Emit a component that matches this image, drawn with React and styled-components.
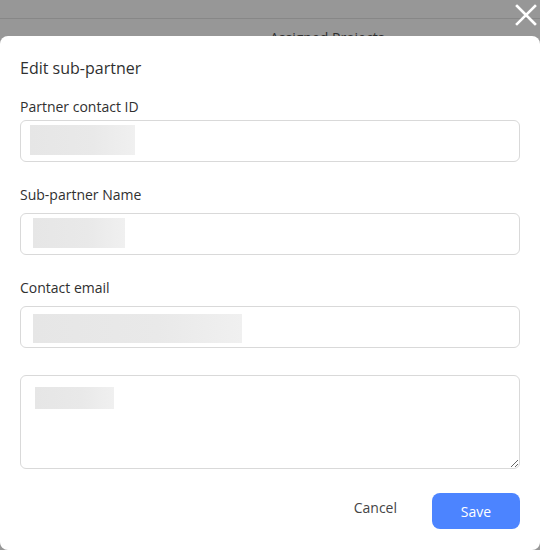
import React from 'react';
import styled, { createGlobalStyle } from 'styled-components';

const GlobalStyle = createGlobalStyle`
  html, body {
    margin: 0;
    padding: 0;
    background: #979797;
    font-family: "Open Sans", "Liberation Sans", sans-serif;
    overflow: hidden;
  }
`;

const Page = styled.div`
  height: 550px;
  background: #979797;
`;

const TopBar = styled.div`
  height: 18px;
  border-bottom: 1px solid #878787;
`;

const PageHeading = styled.div`
  padding-top: 9px;
  padding-left: 270px;
  font-size: 14px;
  color: #2e2e2e;
`;

const Modal = styled.div`
  position: fixed;
  left: 0;
  top: 36px;
  width: 540px;
  height: 514px;
  box-sizing: border-box;
  padding: 20px 20px 21px;
  background: #fff;
  border-radius: 8px;
  display: flex;
  flex-direction: column;
`;

const CloseButton = styled.button`
  position: fixed;
  top: 3px;
  right: 2px;
  width: 24px;
  height: 24px;
  padding: 0;
  border: 0;
  background: transparent;
  display: flex;
  align-items: center;
  justify-content: center;
  cursor: pointer;
`;

const Title = styled.h2`
  margin: 0 0 17px;
  font-size: 16px;
  line-height: 24px;
  font-weight: 400;
  color: #303030;
`;

const Field = styled.div`
  margin-bottom: 23px;
`;

const Label = styled.div`
  font-size: 14px;
  line-height: 20px;
  color: #303030;
  margin-bottom: ${p => p.$gap}px;
`;

const InputBox = styled.div`
  height: 42px;
  box-sizing: border-box;
  border: 1px solid #d9d9d9;
  border-radius: 6px;
  padding: ${p => p.$top}px 0 0 ${p => p.$left}px;
`;

const TextBox = styled.div`
  height: 94px;
  margin-top: 4px;
  box-sizing: border-box;
  border: 1px solid #d9d9d9;
  border-radius: 6px;
  padding: ${p => p.$top}px 0 0 ${p => p.$left}px;
  overflow: auto;
  resize: vertical;
`;

const Redacted = styled.div`
  width: ${p => p.$w}px;
  height: ${p => p.$h}px;
  background: linear-gradient(90deg, #e6e6e6 0%, #e9e9e9 60%, #f0f0f0 100%);
`;

const Footer = styled.div`
  margin-top: 24px;
  display: flex;
  justify-content: flex-end;
  align-items: flex-start;
  gap: 19px;
`;

const CancelButton = styled.button`
  height: 28px;
  padding: 0 16px;
  border: 0;
  background: transparent;
  font-family: inherit;
  font-size: 14px;
  color: #444;
  cursor: pointer;
`;

const SaveButton = styled.button`
  width: 88px;
  height: 36px;
  border: 0;
  border-radius: 8px;
  background: #4c84ff;
  color: #fff;
  font-family: inherit;
  font-size: 14px;
  cursor: pointer;
`;

const fields = [
  { label: 'Partner contact ID', gap: 3, left: 9, top: 4, w: 105, h: 30 },
  { label: 'Sub-partner Name', gap: 8, left: 12, top: 4, w: 92, h: 30 },
  { label: 'Contact email', gap: 8, left: 12, top: 7, w: 209, h: 29 },
];

export default function App() {
  return (
    <>
      <GlobalStyle />
      <Page>
        <TopBar />
        <PageHeading>Assigned Projects</PageHeading>
      </Page>
      <CloseButton aria-label="Close">
        <svg width="22" height="22" viewBox="0 0 22 22">
          <path d="M2 2 L20 20 M20 2 L2 20" stroke="#fff" strokeWidth="2.6" strokeLinecap="square" />
        </svg>
      </CloseButton>
      <Modal>
        <Title>Edit sub-partner</Title>
        {fields.map(f => (
          <Field key={f.label}>
            <Label $gap={f.gap}>{f.label}</Label>
            <InputBox $left={f.left} $top={f.top}>
              <Redacted $w={f.w} $h={f.h} />
            </InputBox>
          </Field>
        ))}
        <TextBox $left={14} $top={11}>
          <Redacted $w={79} $h={22} />
        </TextBox>
        <Footer>
          <CancelButton>Cancel</CancelButton>
          <SaveButton>Save</SaveButton>
        </Footer>
      </Modal>
    </>
  );
}
